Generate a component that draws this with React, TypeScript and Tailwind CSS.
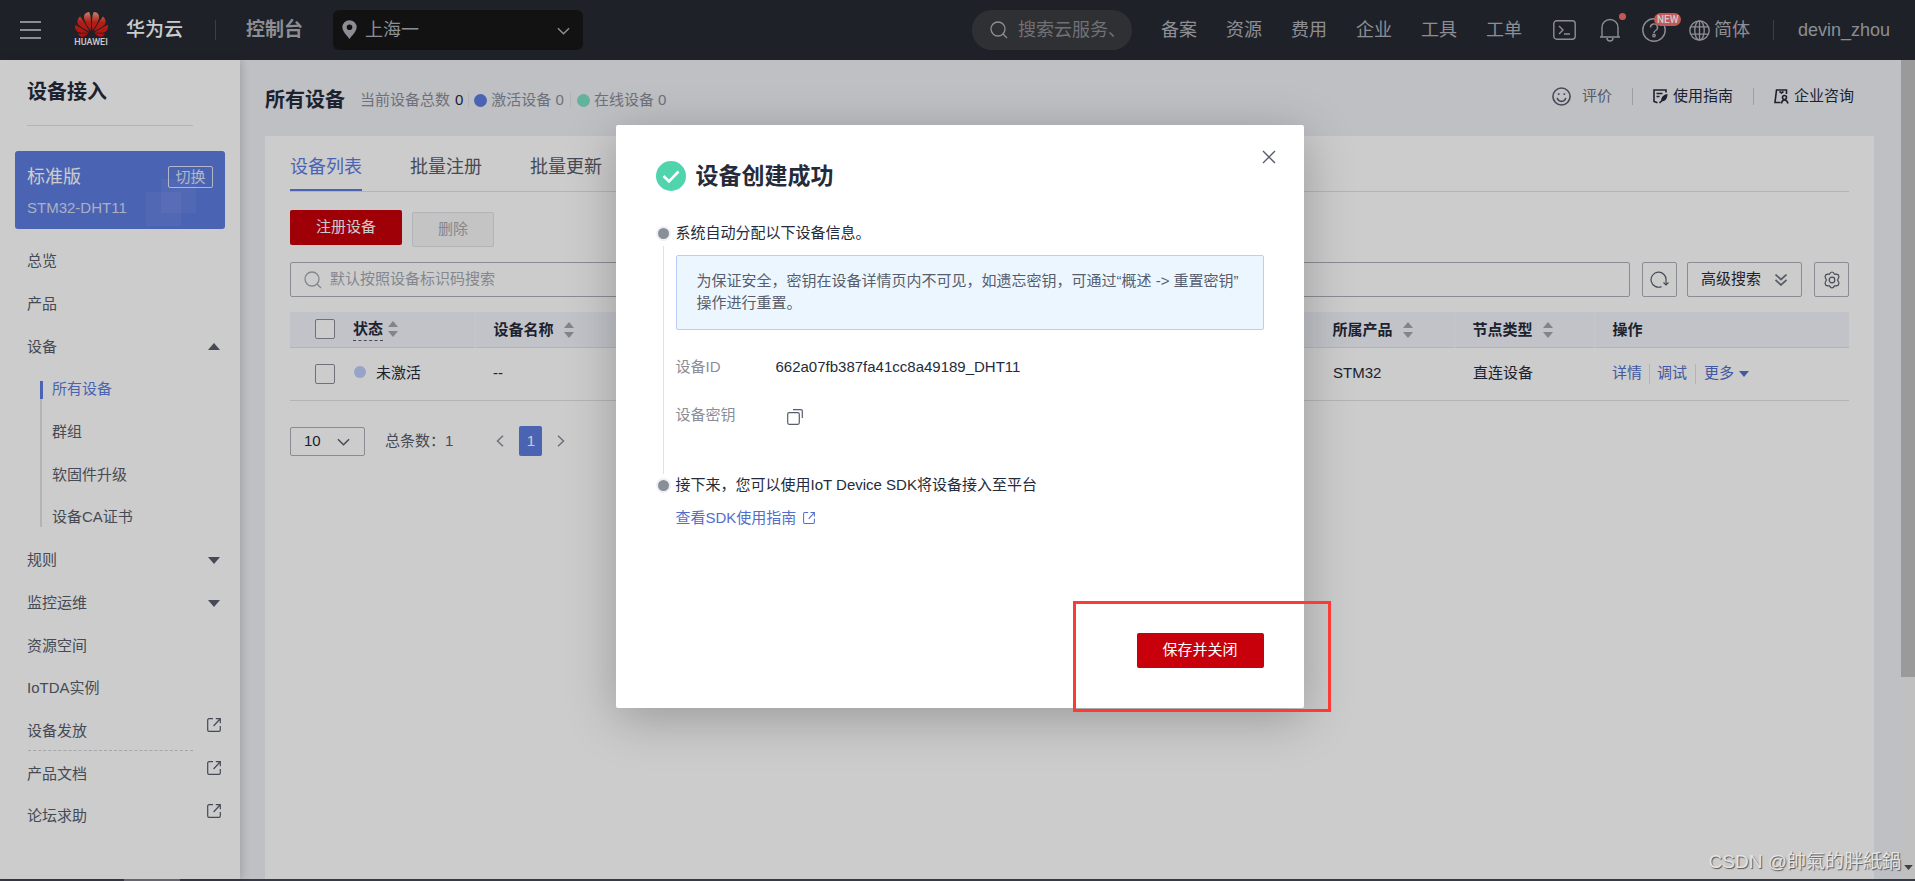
import React from "react";
import { SiHuawei } from "react-icons/si";

const TOP_LINKS = ["备案", "资源", "费用", "企业", "工具", "工单"];

function Triangle({ up = false, className = "" }: { up?: boolean; className?: string }) {
  return (
    <svg viewBox="0 0 12 7" className={className} fill="currentColor" aria-hidden="true">
      <path d={up ? "M6 0 12 7H0Z" : "M0 0H12L6 7Z"} />
    </svg>
  );
}

function SortIcon() {
  return (
    <svg viewBox="0 0 10 16" className="h-4 w-[10px] shrink-0 text-[#a4a5a9]" fill="currentColor" aria-hidden="true">
      <path d="M5 0 10 6H0Z" />
      <path d="M0 10H10L5 16Z" />
    </svg>
  );
}

function ExternalIcon({ className = "" }: { className?: string }) {
  return (
    <svg viewBox="0 0 14 14" className={className} fill="none" stroke="currentColor" strokeWidth="1.2" aria-hidden="true">
      <path d="M6 .7H2A1.3 1.3 0 0 0 .7 2v10A1.3 1.3 0 0 0 2 13.3h10a1.3 1.3 0 0 0 1.3-1.3V8" />
      <path d="M8.8.7h4.5v4.6M13 1 6.6 8" />
    </svg>
  );
}

function ChevronDown({ className = "" }: { className?: string }) {
  return (
    <svg viewBox="0 0 14 8" className={className} fill="none" stroke="currentColor" strokeWidth="1.6" aria-hidden="true">
      <path d="m1 1 6 6 6-6" />
    </svg>
  );
}

function SearchIcon({ className = "" }: { className?: string }) {
  return (
    <svg viewBox="0 0 18 18" className={className} fill="none" stroke="currentColor" strokeWidth="1.3" aria-hidden="true">
      <circle cx="8" cy="8" r="7" />
      <path d="m13 13 4 4" />
    </svg>
  );
}

function Header() {
  return (
    <header className="flex h-[60px] shrink-0 items-center bg-[#272a33] pr-[25px] text-[#b0b2b8]">
      <button aria-label="菜单" className="ml-5 flex h-[18px] w-[21px] flex-col justify-between">
        <span className="h-[2px] w-full bg-[#adb0b8]" />
        <span className="h-[2px] w-full bg-[#adb0b8]" />
        <span className="h-[2px] w-full bg-[#adb0b8]" />
      </button>
      <a href="#" className="ml-[33px] flex items-center gap-[18px] text-white">
        <span className="flex w-[34px] flex-col items-center">
          <svg width="0" height="0" className="absolute" aria-hidden="true">
            <linearGradient id="petals" x1="0.5" y1="0" x2="0.45" y2="1">
              <stop offset="0" stopColor="#f3a183" />
              <stop offset="0.4" stopColor="#e0271c" />
              <stop offset="1" stopColor="#d8160f" />
            </linearGradient>
          </svg>
          <SiHuawei fill="url(#petals)" className="h-[33px] w-[33px] -my-1" />
          <span className="font-[Roboto,sans-serif] text-[9px] leading-[11px] font-medium">HUAWEI</span>
        </span>
        <span className="text-[19px] font-medium">华为云</span>
      </a>
      <span className="ml-8 h-5 w-px bg-[#4b4e57]" />
      <a href="#" className="ml-[30px] text-[19px] font-bold">控制台</a>
      <div className="relative ml-[30px] w-[250px]">
        <svg viewBox="0 0 16 20" className="absolute top-[10px] left-[9px] h-[19px] w-[15px]" aria-hidden="true">
          <path fill="currentColor" fillRule="evenodd" d="M8 0a7.6 7.6 0 0 1 7.6 7.6C15.600 12 11 16 8 20 5 16 .4 12 .4 7.600A7.600 7.600 0 0 1 8 0Zm0 4.600a3 3 0 1 0 0 6 3 3 0 0 0 0-6Z" />
        </svg>
        <select aria-label="区域" className="h-10 w-full appearance-none rounded-md bg-[#171717] pl-8 text-[18px]">
          <option>上海一</option>
        </select>
        <ChevronDown className="absolute top-[17px] right-[13px] h-2 w-[13px]" />
      </div>
      <label className="ml-auto flex h-10 w-40 items-center gap-[10px] rounded-[20px] bg-[#3b3d42] pr-4 pl-[18px]">
        <SearchIcon className="h-[18px] w-[18px] shrink-0" />
        <input aria-label="搜索" placeholder="搜索云服务、" className="w-full min-w-0 bg-transparent text-[18px] placeholder:text-[#8d8e93] focus:outline-none" />
      </label>
      <nav className="ml-[29px] flex gap-[29px] text-[18px]">
        {TOP_LINKS.map((t) => (
          <a key={t} href="#">{t}</a>
        ))}
      </nav>
      <button aria-label="命令行" className="ml-[31px]">
        <svg viewBox="0 0 23 20" className="h-5 w-[23px]" fill="none" stroke="currentColor" strokeWidth="1.4">
          <rect x=".8" y=".8" width="21.400" height="18.400" rx="3" />
          <path d="m6 6 4 4-4 4M11 14h6" />
        </svg>
      </button>
      <button aria-label="消息" className="relative ml-[23px]">
        <svg viewBox="0 0 22 24" className="h-6 w-[22px]" fill="none" stroke="currentColor" strokeWidth="1.4">
          <path d="M1 19h20M3 19V9.500a8 8 0 0 1 16 0V19M8 20a3 3 0 0 0 6 0" />
        </svg>
        <span className="absolute -top-[5px] -right-[5px] h-[7px] w-[7px] rounded-full bg-[#f66f6a]" />
      </button>
      <button aria-label="帮助" className="relative ml-[21px]">
        <svg viewBox="0 0 24 24" className="h-6 w-6" fill="none" stroke="currentColor" strokeWidth="1.4">
          <circle cx="12" cy="12" r="11.200" />
          <path d="M8.500 9.500a3.500 3.500 0 1 1 5.200 3C12.400 13.200 12 13.700 12 15" />
          <circle cx="12" cy="17.500" r="1.200" />
        </svg>
        <span className="absolute -top-[5px] left-3 rounded-full bg-[#f66f6a] px-[3px] font-[Roboto,sans-serif] text-[10px] leading-[13px] font-medium text-white">NEW</span>
      </button>
      <button className="ml-[23px] flex items-center gap-1 text-[18px]">
        <svg viewBox="0 0 20 20" className="h-[21px] w-[21px]" fill="none" stroke="currentColor" strokeWidth="1.300" aria-hidden="true">
          <circle cx="10" cy="10" r="9.200" />
          <ellipse cx="10" cy="10" rx="4.500" ry="9.200" />
          <path d="M1.500 6.500h17M1.500 13.500h17M10 1v18" />
        </svg>
        简体
      </button>
      <span className="ml-[23px] h-5 w-px bg-[#4b4e57]" />
      <a href="#" className="ml-6 text-[18px]">devin_zhou</a>
    </header>
  );
}

function NavItem({ label, icon, className = "" }: { label: string; icon?: React.ReactNode; className?: string }) {
  return (
    <li className={"relative " + className}>
      <a href="#" className="flex h-full items-center justify-between pr-[20px] pl-[27px]">
        {label}
        {icon}
      </a>
    </li>
  );
}

function Sidebar() {
  const ext = <ExternalIcon className="mr-[-1px] mb-3 h-[14px] w-[14px]" />;
  return (
    <aside className="relative w-60 shrink-0 bg-white text-[15px] text-[#575d6c] shadow-[2px_0_8px_rgba(0,0,0,0.16)]">
      <h2 className="mr-[47px] ml-[27px] h-[66px] border-b border-[#dfe1e6] pt-4 text-[20px] leading-8 font-bold text-[#252b3a]">设备接入</h2>
      <section className="relative mx-[15px] mt-[25px] h-[78px] overflow-hidden rounded-[3px] bg-[#5e7ce0] px-3 pt-[13px] text-white">
        <span className="absolute top-[41px] right-[44px] h-[34px] w-[35px] bg-white/5" />
        <span className="absolute top-[28px] right-[29px] h-[34px] w-[35px] bg-white/5" />
        <div className="flex items-center justify-between">
          <span className="text-[18px] leading-[26px]">标准版</span>
          <button className="relative h-[22px] w-[45px] rounded-[2px] border border-white/80 text-[15px] leading-[20px] text-[#dfe5f9]">切换</button>
        </div>
        <div className="mt-2 leading-5 text-[#d5dcf6]">STM32-DHT11</div>
      </section>
      <ul className="mt-[11px] grid h-[598px] auto-rows-fr">
        <NavItem label="总览" />
        <NavItem label="产品" />
        <NavItem label="设备" icon={<Triangle up className="h-[7px] w-3" />} />
        <li className="row-span-4 pl-10">
          <ul className="grid h-full grid-rows-4">
            <li className="relative flex items-center pl-3 text-[#5e7ce0]">
              <span className="absolute top-[14px] bottom-0 left-0 w-[2px] bg-[#dfe1e6]" />
              <span className="absolute top-[13px] left-0 h-[18px] w-[3px] bg-[#5e7ce0]" />
              <a href="#">所有设备</a>
            </li>
            <li className="flex items-center border-l-2 border-[#dfe1e6] pl-[10px]"><a href="#">群组</a></li>
            <li className="flex items-center border-l-2 border-[#dfe1e6] pl-[10px]"><a href="#">软固件升级</a></li>
            <li className="relative flex items-center pl-3">
              <span className="absolute top-0 bottom-3 left-0 w-[2px] bg-[#dfe1e6]" />
              <a href="#">设备CA证书</a>
            </li>
          </ul>
        </li>
        <NavItem label="规则" icon={<Triangle className="h-[7px] w-3" />} />
        <NavItem label="监控运维" icon={<Triangle className="h-[7px] w-3" />} />
        <NavItem label="资源空间" />
        <NavItem label="IoTDA实例" />
        <NavItem
          label="设备发放"
          icon={ext}
          className="after:absolute after:right-[47px] after:bottom-[2px] after:left-7 after:border-b after:border-dashed after:border-[#cfd1d6]"
        />
        <NavItem label="产品文档" icon={ext} />
        <NavItem label="论坛求助" icon={ext} />
      </ul>
    </aside>
  );
}

function PageTitle() {
  return (
    <div className="flex h-[76px] items-center pr-5 pb-3 text-[15px] text-[#8a8e99]">
      <h1 className="mt-4 text-[20px] font-bold text-[#252b3a]">所有设备</h1>
      <div className="mt-4 ml-[15px] flex items-center">
        当前设备总数<span className="ml-[5px] text-[#252b3a]">0</span>
        <span className="mx-[5px] h-4 w-px bg-[#dfe1e6]" />
        <span className="mr-1 h-[13px] w-[13px] rounded-full bg-[#5e7ce0]" />
        激活设备 0
        <span className="mx-[6px] h-4 w-px bg-[#dfe1e6]" />
        <span className="mr-1 h-[13px] w-[13px] rounded-full bg-[#7be0c0]" />
        在线设备 0
      </div>
      <div className="mt-2 ml-auto flex items-center text-[#252b3a]">
        <button className="flex items-center gap-[11px] text-[#6c717d]">
          <svg viewBox="0 0 20 20" className="h-[19px] w-[19px] text-[#575d6c]" fill="none" stroke="currentColor" strokeWidth="1.700" aria-hidden="true">
            <circle cx="10" cy="10" r="9" />
            <path d="M5.500 11.500a4.600 4.600 0 0 0 9 0M7 6.500v2M13 6.500v2" />
          </svg>
          评价
        </button>
        <span className="mx-5 h-[17px] w-px bg-[#c4c6cc]" />
        <a href="#" className="flex items-center gap-[5px]">
          <svg viewBox="0 0 15 15" className="h-[15px] w-[15px]" fill="none" stroke="currentColor" strokeWidth="1.600" aria-hidden="true">
            <path d="M13 3.500V1H1v11.500l3.500 1.300M3.500 4.500h6M3.500 7.500h3" />
            <path d="M14.500 5c-4 .5-6.500 3-6.500 7.500 4.500 0 6.500-3 6.500-7.500Z" fill="currentColor" stroke="none" />
            <path d="m6.500 14 2.500-2.500" />
          </svg>
          使用指南
        </a>
        <span className="mx-5 h-[17px] w-px bg-[#c4c6cc]" />
        <a href="#" className="flex items-center gap-[5px]">
          <svg viewBox="0 0 15 15" className="h-[15px] w-[15px]" fill="none" stroke="currentColor" strokeWidth="1.600" aria-hidden="true">
            <path d="M12.500 5V1H2.500L1 13.500h5.500" />
            <path d="m5.500 2.500 2 1.500 2-1.500" />
            <circle cx="10.500" cy="8.500" r="2" />
            <path d="M7.500 14.500c.3-2.500 1.300-3.500 3-3.500s2.800 1 3.500 3.500" />
          </svg>
          企业咨询
        </a>
      </div>
    </div>
  );
}

const outline = "rounded-[2px] border border-[#adb0b8]";
const th = "border-l border-[#f8f9fb] pl-[18px] text-left font-bold";

function DeviceCard() {
  return (
    <section className="flex-1 bg-white px-[25px] text-[15px] text-[#252b3a]">
      <div role="tablist" className="flex h-14 gap-12 border-b border-[#dfe1e6] text-[18px] text-[#575d6c]">
        <button role="tab" aria-selected="true" className="h-[55px] border-b-2 border-[#5e7ce0] pt-[10px] text-[#5e7ce0]">设备列表</button>
        <button role="tab" className="h-[55px] pt-2">批量注册</button>
        <button role="tab" className="h-[55px] pt-2">批量更新</button>
      </div>
      <div className="mt-[18px] flex gap-[10px]">
        <button className="h-[35px] w-28 rounded-[2px] bg-[#c7000b] text-white">注册设备</button>
        <button disabled className="mt-[2px] h-[35px] w-[82px] rounded-[2px] border border-[#dfe1e6] bg-[#f5f5f6] text-[#a6a9b1]">删除</button>
      </div>
      <div className="mt-[15px] flex">
        <label className={"flex h-[35px] flex-1 items-center gap-2 pl-[13px] " + outline}>
          <SearchIcon className="h-[18px] w-[18px] text-[#a6a9b1]" />
          <input aria-label="搜索设备" placeholder="默认按照设备标识码搜索" className="flex-1 bg-transparent placeholder:text-[#a6a9b1] focus:outline-none" />
        </label>
        <button aria-label="刷新" className={"ml-3 flex h-[35px] w-[35px] items-center justify-center text-[#575d6c] " + outline}>
          <svg viewBox="0 0 19 17" className="h-[17px] w-[19px]" fill="none" stroke="currentColor" strokeWidth="1.200">
            <path d="M11.500 15.600A7.500 7.500 0 1 1 16 9.500V13" />
            <path d="m13.500 11.500 2.500 2.500 2.500-2.500" />
          </svg>
        </button>
        <button className={"ml-[10px] flex h-[35px] w-[115px] items-center justify-between pr-[14px] pl-[13px] " + outline}>
          高级搜索
          <svg viewBox="0 0 12 12" className="h-3 w-3 text-[#71757f]" fill="none" stroke="currentColor" strokeWidth="1.700" aria-hidden="true">
            <path d="m.5.5 5.500 5 5.500-5M.5 6l5.500 5 5.500-5" />
          </svg>
        </button>
        <button aria-label="设置" className={"ml-3 flex h-[35px] w-[35px] items-center justify-center text-[#575d6c] " + outline}>
          <svg viewBox="0 0 18 18" className="h-[18px] w-[18px]" fill="none" stroke="currentColor" strokeWidth="1.200">
            <path d="M6.500 3.200C7.200 1.500 7.800 1 9 1s1.800.5 2.500 2.200c1.800-.3 2.800-.2 3.900.8.900 1.500 1 2.300-.2 3.600-.6.700-.6 2.100 0 2.800 1.200 1.300 1.100 2.100.2 3.600-1.100 1-2.100 1.100-3.900.8C10.800 16.500 10.200 17 9 17s-1.800-.5-2.500-2.200c-1.800.3-2.800.2-3.900-.8-.9-1.500-1-2.300.2-3.600.6-.7.6-2.100 0-2.800C1.600 6.300 1.700 5.500 2.600 4c1.100-1 2.100-1.100 3.900-.8Z" />
            <circle cx="9" cy="9" r="2.800" />
          </svg>
        </button>
      </div>
      <table className="mt-[15px] w-full table-fixed border-collapse">
        <colgroup>
          <col className="w-[185px]" />
          <col className="w-[140px]" />
          <col />
          <col className="w-[140px]" />
          <col className="w-[140px]" />
          <col className="w-[255px]" />
        </colgroup>
        <thead className="bg-[#f2f4fa]">
          <tr className="h-[35px] border-b border-[#dfe1e6]">
            <th className="pl-[25px] text-left font-bold">
              <div className="flex items-center">
                <input type="checkbox" aria-label="全选" className="h-5 w-5 appearance-none rounded-[2px] border border-[#8a8e99] bg-white" />
                <span className="ml-[18px] border-b border-dashed border-[#575d6c]">状态</span>
                <span className="ml-[5px]"><SortIcon /></span>
              </div>
            </th>
            <th className={th}><div className="flex items-center gap-[10px] pt-[2px]">设备名称<SortIcon /></div></th>
            <td />
            <th className={th}><div className="flex items-center gap-[10px] pt-[2px]">所属产品<SortIcon /></div></th>
            <th className={th}><div className="flex items-center gap-[10px] pt-[2px]">节点类型<SortIcon /></div></th>
            <th className={th}><div className="pt-[2px]">操作</div></th>
          </tr>
        </thead>
        <tbody>
          <tr className="h-[53px] border-b border-[#dfe1e6]">
            <td className="pl-[25px]">
              <div className="flex items-center">
                <input type="checkbox" aria-label="选择设备" className="h-5 w-5 appearance-none rounded-[2px] border border-[#8a8e99] bg-white" />
                <span className="mr-[10px] mb-[3px] ml-[19px] h-3 w-3 rounded-full bg-[#beccfa]" />
                未激活
              </div>
            </td>
            <td className="pl-[18px]">--</td>
            <td />
            <td className="pl-[19px]">STM32</td>
            <td className="pl-[19px]">直连设备</td>
            <td className="pl-[18px]">
              <div className="flex items-center text-[#526ecc]">
                <a href="#">详情</a>
                <span className="mx-[7px] h-5 w-px bg-[#dfe1e6]" />
                <a href="#">调试</a>
                <span className="mx-[8px] h-5 w-px bg-[#dfe1e6]" />
                <a href="#" className="flex items-center gap-[5px]">更多<Triangle className="h-[6px] w-[10px]" /></a>
              </div>
            </td>
          </tr>
        </tbody>
      </table>
      <div className="mt-[25px] flex h-[31px] items-center text-[#575d6c]">
        <div className="relative w-[75px]">
          <select aria-label="每页条数" className={"block h-[29px] w-full appearance-none bg-white pl-[13px] text-[#252b3a] " + outline}>
            <option>10</option>
          </select>
          <ChevronDown className="absolute top-[11px] right-[15px] h-2 w-[13px]" />
        </div>
        <span className="ml-5">总条数：1</span>
        <button aria-label="上一页" className="ml-[43px] text-[#8a8e99]">
          <svg viewBox="0 0 8 12" className="h-3 w-2" fill="none" stroke="currentColor" strokeWidth="1.500"><path d="M7 .8 1.500 6 7 11.200" /></svg>
        </button>
        <button className="ml-[15px] h-[30px] w-[23px] rounded-[2px] bg-[#5e7ce0] text-white">1</button>
        <button aria-label="下一页" className="ml-[15px] text-[#8a8e99]">
          <svg viewBox="0 0 8 12" className="h-3 w-2" fill="none" stroke="currentColor" strokeWidth="1.500"><path d="M1 .8 6.500 6 1 11.200" /></svg>
        </button>
      </div>
    </section>
  );
}

function Bullet() {
  return <span className="h-[15px] w-[15px] shrink-0 rounded-full border-2 border-[#eef0f5] bg-[#8a8e99]" />;
}

function SuccessDialog() {
  return (
    <div role="dialog" aria-labelledby="dialog-title" className="relative flex min-h-[583px] w-[688px] flex-col rounded-[2px] bg-white px-10 pb-10 text-[15px] text-[#252b3a] shadow-[0_10px_50px_rgba(0,0,0,0.25)]">
      <div className="flex items-start justify-between pt-[25px]">
        <h2 id="dialog-title" className="mt-[11px] flex items-center gap-[10px] text-[23px] leading-[30px] font-bold">
          <svg viewBox="0 0 30 30" className="h-[30px] w-[30px]" aria-hidden="true">
            <circle cx="15" cy="15" r="15" fill="#50d4ab" />
            <path d="m7.500 15 5.500 5.500 9.500-10" fill="none" stroke="#fff" strokeWidth="2.600" />
          </svg>
          设备创建成功
        </h2>
        <button aria-label="关闭" className="-mr-3 text-[#575d6c]">
          <svg viewBox="0 0 14 14" className="h-[14px] w-[14px]" fill="none" stroke="currentColor" strokeWidth="1.400"><path d="m1 1 12 12M13 1 1 13" /></svg>
        </button>
      </div>
      <ol className="mt-[31px]">
        <li className="relative pb-[26px]">
          <span className="absolute top-6 bottom-0 left-[7px] w-px bg-[#dfe1e6]" />
          <div className="flex h-[22px] items-center gap-[5px]"><Bullet />系统自动分配以下设备信息。</div>
          <div className="mt-[11px] ml-5">
            <p className="rounded-[2px] border border-[#beccfa] bg-[#ebf6ff] pt-[14px] pr-[14px] pb-[15px] pl-5 leading-[22px] text-[#575d6c]">
              为保证安全，密钥在设备详情页内不可见，如遗忘密钥，可通过“概述 -&gt; 重置密钥”<wbr />操作进行重置。
            </p>
            <dl className="mt-[26px] grid grid-cols-[100px_1fr] gap-y-[26px] leading-[22px]">
              <dt className="text-[#8a8e99]">设备ID</dt>
              <dd>662a07fb387fa41cc8a49189_DHT11</dd>
              <dt className="text-[#8a8e99]">设备密钥</dt>
              <dd className="flex items-center pl-[11px]">
                <button aria-label="复制" className="mt-[3px] text-[#575d6c]">
                  <svg viewBox="0 0 16 16" className="h-4 w-4" fill="none" stroke="currentColor" strokeWidth="1.200">
                    <rect x=".7" y="3.700" width="11.600" height="11.600" rx="1.500" />
                    <path d="M6 .7h8a1.300 1.300 0 0 1 1.300 1.300v7" />
                  </svg>
                </button>
              </dd>
            </dl>
          </div>
          <div className="h-[22px]" />
        </li>
        <li>
          <div className="flex h-[22px] items-center gap-[5px]"><Bullet />接下来，您可以使用IoT Device SDK将设备接入至平台</div>
          <a href="#" className="mt-[11px] ml-5 flex h-[22px] w-fit items-center gap-[7px] text-[#526ecc]">
            查看SDK使用指南
            <ExternalIcon className="h-3 w-3" />
          </a>
        </li>
      </ol>
      <button className="mt-auto h-[35px] w-[127px] self-end rounded-[2px] bg-[#c7000b] text-white">保存并关闭</button>
      <span className="pointer-events-none absolute -right-[27px] -bottom-[4px] h-[111px] w-[258px] border-3 border-[#fc3b36]" />
    </div>
  );
}

export default function App() {
  return (
    <div className="relative flex min-h-screen flex-col bg-[#eef0f5] font-['Liberation_Sans','Noto_Sans_CJK_SC',sans-serif]">
      <Header />
      <div className="flex flex-1">
        <Sidebar />
        <main className="flex min-w-0 flex-1 flex-col pr-[27px] pl-[25px]">
          <PageTitle />
          <DeviceCard />
        </main>
        <div className="flex w-[14px] shrink-0 flex-col items-center justify-between bg-[#f1f1f1] pb-[9px]">
          <span className="h-[617px] w-full bg-[#c1c1c1]" />
          <Triangle className="h-[5px] w-[9px] text-[#505050]" />
        </div>
      </div>
      <div className="h-[2px] bg-[#444858] pl-[124px]">
        <div className="h-full w-14 bg-[#8a8794]" />
      </div>
      <div className="absolute inset-0 flex items-start justify-center bg-black/20 pt-[125px] pl-1">
        <SuccessDialog />
      </div>
      <span className="absolute right-[14px] bottom-[4px] font-['Liberation_Sans','Noto_Sans_CJK_TC',sans-serif] text-[19px] leading-[30px] text-[#e4e4e4] [text-shadow:1px_1px_1px_#555]">
        CSDN @帥氣的胖紙鍋
      </span>
    </div>
  );
}
